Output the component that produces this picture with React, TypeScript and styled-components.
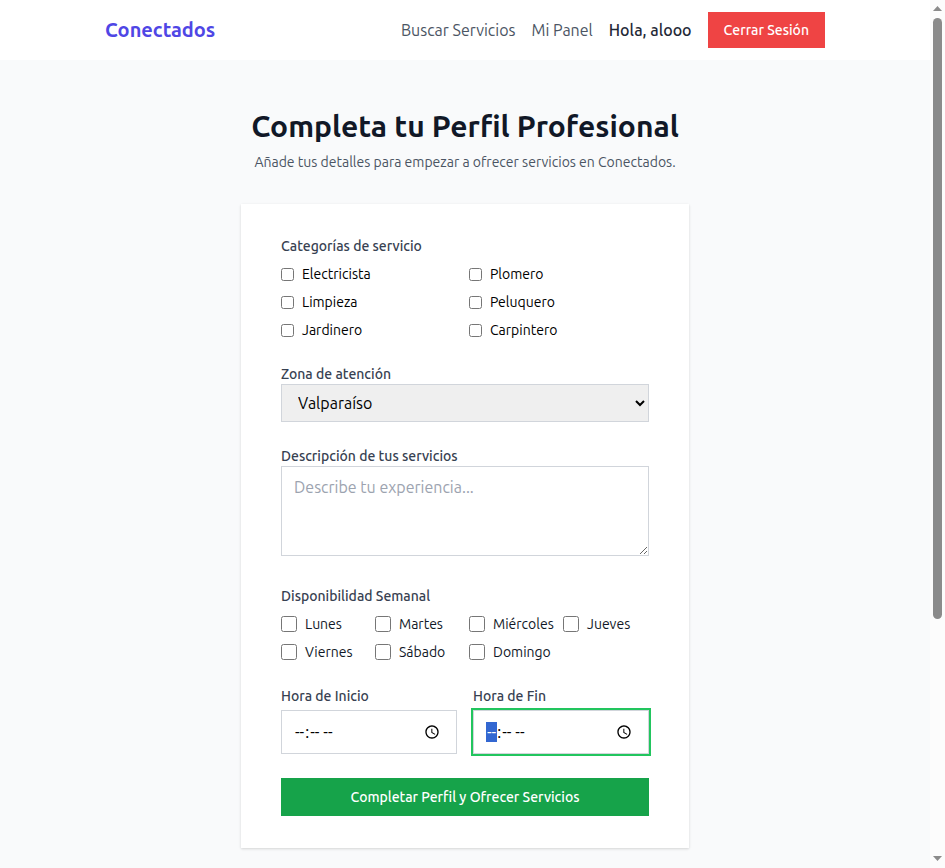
import React, { useEffect, useRef } from 'react';
import styled, { createGlobalStyle } from 'styled-components';

const GlobalStyle = createGlobalStyle`
  *, *::before, *::after { box-sizing: border-box; }
  html, body { margin: 0; height: 100%; overflow: hidden; }
  body {
    background: #f9fafb;
    color: #000;
    font: 400 16px/24px Ubuntu, "Noto Sans", sans-serif;
  }
  h1, p { margin: 0; }
  input, select, textarea, button { font: inherit; color: inherit; margin: 0; }
`;

const Window = styled.div`
  display: flex;
  height: 100vh;
  overflow: hidden;
`;

const Page = styled.div`
  flex: 1;
  min-width: 0;
`;

const Header = styled.header`
  height: 60px;
  background: #fff;
`;

const HeaderInner = styled.div`
  display: flex;
  align-items: center;
  justify-content: space-between;
  width: 720px;
  height: 100%;
  margin: 0 auto;
`;

const Logo = styled.a`
  color: #4f46e5;
  font-size: 20px;
  line-height: 28px;
  font-weight: 700;
`;

const Nav = styled.nav`
  display: flex;
  align-items: center;
  gap: 16px;
`;

const NavLink = styled.a`
  color: #4b5563;
`;

const Greeting = styled.span`
  color: #1f2937;
  font-weight: 500;
`;

const LogoutButton = styled.button`
  padding: 8px 16px;
  border: 0;
  background: #ef4444;
  color: #fff;
  font-size: 14px;
  line-height: 20px;
  font-weight: 500;
`;

const Main = styled.main`
  display: flex;
  flex-direction: column;
  align-items: center;
  padding: 48px 16px;
`;

const Title = styled.h1`
  color: #111827;
  font-size: 30px;
  line-height: 36px;
  font-weight: 700;
`;

const Subtitle = styled.p`
  margin: 8px 0 32px;
  color: #4b5563;
  font-size: 14px;
  line-height: 20px;
`;

const Card = styled.form`
  display: flex;
  flex-direction: column;
  gap: 24px;
  width: 448px;
  padding: 32px 40px;
  background: #fff;
  box-shadow: 0 1px 3px rgba(0, 0, 0, 0.1), 0 1px 2px rgba(0, 0, 0, 0.06);
`;

const Field = styled.div<{ $extra?: number; $gap?: number }>`
  display: flex;
  flex-direction: column;
  gap: ${(p) => p.$gap ?? 0}px;
  padding-bottom: ${(p) => p.$extra ?? 0}px;
`;

const Label = styled.label`
  color: #374151;
  font-size: 14px;
  line-height: 20px;
  font-weight: 500;
`;

const OptionGrid = styled.div<{ $columns: number }>`
  display: grid;
  grid-template-columns: repeat(${(p) => p.$columns}, minmax(0, 1fr));
  gap: 8px;
`;

const Option = styled.label<{ $color: string }>`
  display: flex;
  align-items: center;
  gap: 8px;
  color: ${(p) => p.$color};
  font-size: 14px;
  line-height: 20px;
`;

const Checkbox = styled.input<{ $size: number }>`
  flex: none;
  width: ${(p) => p.$size}px;
  height: ${(p) => p.$size}px;
`;

const Select = styled.select`
  height: 38px;
  padding: 0 12px;
  border: 1px solid #d1d5db;
  border-radius: 0;
  background: #efefef;
`;

const TextArea = styled.textarea`
  height: 90px;
  padding: 8px 12px;
  border: 1px solid #d1d5db;
  background: #fff;
  resize: vertical;
  &::placeholder { color: #9ca3af; }
`;

const TimeRow = styled.div`
  display: grid;
  grid-template-columns: 1fr 1fr;
  gap: 16px;
`;

const TimeInput = styled.input`
  width: 100%;
  height: 44px;
  padding: 8px 12px;
  border: 1px solid #d1d5db;
  background: #fff;
  &:focus {
    outline: none;
    box-shadow: 0 0 0 2px #22c55e;
  }
`;

const SubmitButton = styled.button`
  height: 38px;
  border: 0;
  background: #16a34a;
  color: #fff;
  font-size: 14px;
  line-height: 20px;
  font-weight: 500;
`;

const ScrollTrack = styled.div`
  display: flex;
  flex-direction: column;
  align-items: center;
  flex: none;
  width: 15px;
  padding: 6px 0 7px;
  background: #fcfcfc;
`;

const ScrollThumb = styled.div`
  width: 9px;
  height: 601px;
  margin: 7px 0 auto;
  border-radius: 5px;
  background: #8b8b8b;
`;

const ScrollArrow = styled.svg`
  flex: none;
  display: block;
  width: 9px;
  height: 5px;
  fill: #8b8b8b;
`;

const categories = ['Electricista', 'Plomero', 'Limpieza', 'Peluquero', 'Jardinero', 'Carpintero'];
const days = ['Lunes', 'Martes', 'Miércoles', 'Jueves', 'Viernes', 'Sábado', 'Domingo'];

export default function App() {
  const endTime = useRef<HTMLInputElement>(null);
  useEffect(() => {
    endTime.current?.focus();
  }, []);

  return (
    <Window>
      <GlobalStyle />
      <Page>
        <Header>
          <HeaderInner>
            <Logo>Conectados</Logo>
            <Nav>
              <NavLink>Buscar Servicios</NavLink>
              <NavLink>Mi Panel</NavLink>
              <Greeting>Hola, alooo</Greeting>
              <LogoutButton type="button">Cerrar Sesión</LogoutButton>
            </Nav>
          </HeaderInner>
        </Header>
        <Main>
          <Title>Completa tu Perfil Profesional</Title>
          <Subtitle>Añade tus detalles para empezar a ofrecer servicios en Conectados.</Subtitle>
          <Card>
            <Field $gap={8}>
              <Label as="span">Categorías de servicio</Label>
              <OptionGrid $columns={2}>
                {categories.map((name) => (
                  <Option key={name} $color="#000">
                    <Checkbox type="checkbox" $size={13} />
                    {name}
                  </Option>
                ))}
              </OptionGrid>
            </Field>
            <Field>
              <Label htmlFor="zone">Zona de atención</Label>
              <Select id="zone">
                <option>Valparaíso</option>
              </Select>
            </Field>
            <Field $extra={6}>
              <Label htmlFor="description">Descripción de tus servicios</Label>
              <TextArea id="description" placeholder="Describe tu experiencia..." />
            </Field>
            <Field $gap={8}>
              <Label as="span">Disponibilidad Semanal</Label>
              <OptionGrid $columns={4}>
                {days.map((name) => (
                  <Option key={name} $color="#111827">
                    <Checkbox type="checkbox" $size={16} />
                    {name}
                  </Option>
                ))}
              </OptionGrid>
            </Field>
            <TimeRow>
              <Field $gap={4}>
                <Label htmlFor="start">Hora de Inicio</Label>
                <TimeInput id="start" type="time" />
              </Field>
              <Field $gap={4}>
                <Label htmlFor="end">Hora de Fin</Label>
                <TimeInput id="end" type="time" ref={endTime} />
              </Field>
            </TimeRow>
            <SubmitButton type="button">Completar Perfil y Ofrecer Servicios</SubmitButton>
          </Card>
        </Main>
      </Page>
      <ScrollTrack>
        <ScrollArrow viewBox="0 0 9 5"><path d="M4.5 0 9 5H0z" /></ScrollArrow>
        <ScrollThumb />
        <ScrollArrow viewBox="0 0 9 5"><path d="M0 0h9L4.5 5z" /></ScrollArrow>
      </ScrollTrack>
    </Window>
  );
}
